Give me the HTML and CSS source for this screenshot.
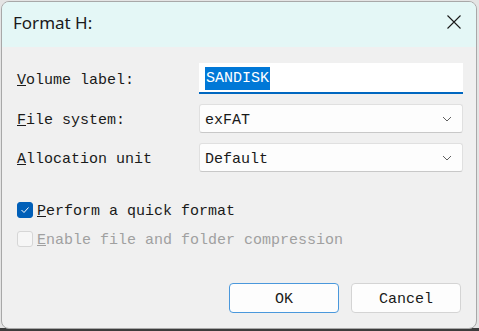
FILE: index.html
```html
<!DOCTYPE html>
<html>
<head>
    <meta charset="UTF-8">
    <title>Format H:</title>
    <link rel="stylesheet" href="styles.css">
</head>
<body>
    <div class="window">
        <div class="titlebar">
            <span class="title">Format H:</span>
            <svg class="close" width="16" height="16" viewBox="0 0 16 16">
                <path d="M1.5 1.5 L14.5 14.5 M14.5 1.5 L1.5 14.5" stroke="#1a1a1a" stroke-width="1.1" fill="none"/>
            </svg>
        </div>
        <div class="content">
            <div class="fields">
                <label class="label"><u>V</u>olume label:</label>
                <div class="textbox"><span class="selected">SANDISK</span></div>

                <label class="label"><u>F</u>ile system:</label>
                <div class="dropdown">
                    <span class="value">exFAT</span>
                    <svg width="10" height="6" viewBox="0 0 10 6"><path d="M1 1 L5 5 L9 1" stroke="#606060" fill="none"/></svg>
                </div>

                <label class="label"><u>A</u>llocation unit</label>
                <div class="dropdown">
                    <span class="value">Default</span>
                    <svg width="10" height="6" viewBox="0 0 10 6"><path d="M1 1 L5 5 L9 1" stroke="#606060" fill="none"/></svg>
                </div>
            </div>

            <div class="checks">
                <div class="check">
                    <span class="box checked">
                        <svg width="10" height="8" viewBox="0 0 10 8"><path d="M1.5 4 L4 6.5 L8.5 1.5" stroke="#fff" stroke-width="1" fill="none"/></svg>
                    </span>
                    <span class="value"><u>P</u>erform a quick format</span>
                </div>
                <div class="check disabled">
                    <span class="box"></span>
                    <span class="value"><u>E</u>nable file and folder compression</span>
                </div>
            </div>

            <div class="buttons">
                <button class="btn default">OK</button>
                <button class="btn">Cancel</button>
            </div>
        </div>
    </div>
</body>
</html>
```

FILE: styles.css
```css
body {
    margin: 0;
    width: 479px;
    height: 331px;
    overflow: hidden;
    background: linear-gradient(to bottom, #e4e4e4 328px, #3c3c3c 328px);
}

.window {
    margin: 1px 0 0 1px;
    width: 476px;
    height: 328px;
    box-sizing: border-box;
    border: 1px solid #a8a8a8;
    border-radius: 8px;
    overflow: hidden;
    display: flex;
    flex-direction: column;
    background: #f0f0f0;
}

.titlebar {
    height: 45px;
    box-sizing: border-box;
    flex-shrink: 0;
    background: #e4f7f6;
    display: flex;
    align-items: center;
    justify-content: space-between;
    padding: 0 14px 5px 11px;
}

.title {
    font-family: "Noto Sans", sans-serif;
    font-size: 17px;
    color: #1a1a1a;
}

.content {
    flex: 1;
    display: flex;
    flex-direction: column;
    padding: 16px 13px 0 15px;
    font-family: "Liberation Mono", monospace;
    font-size: 15px;
    color: #1a1a1a;
}

.fields {
    display: grid;
    grid-template-columns: 182px 264px;
    row-gap: 10px;
    align-items: center;
}

.label, .value {
    padding-top: 4px;
}

.textbox {
    height: 31px;
    box-sizing: border-box;
    background: #fff;
    border-bottom: 2px solid #0067c0;
    display: flex;
    align-items: center;
    padding: 2px 0 0 6px;
}

.selected {
    background: #0078d7;
    color: #fff;
    line-height: 23px;
    padding: 0 1px;
}

.dropdown {
    height: 29px;
    box-sizing: border-box;
    background: #fdfdfd;
    border: 1px solid #e0e0e0;
    border-bottom-color: #c8c8c8;
    border-radius: 3px;
    display: flex;
    align-items: center;
    justify-content: space-between;
    padding: 0 10px 0 5px;
}

.checks {
    margin-top: 23px;
    display: flex;
    flex-direction: column;
}

.check {
    height: 29px;
    display: flex;
    align-items: center;
    gap: 4px;
}

.box {
    width: 16px;
    height: 16px;
    box-sizing: border-box;
    border: 1px solid #d6d6d6;
    border-radius: 3px;
    background: #f6f6f6;
    display: flex;
    align-items: center;
    justify-content: center;
}

.box.checked {
    background: #005fb8;
    border-color: #005fb8;
}

.check.disabled {
    color: #a0a0a0;
}

.buttons {
    margin-top: auto;
    margin-bottom: 15px;
    display: flex;
    justify-content: flex-end;
    gap: 12px;
    padding-right: 2px;
}

.btn {
    width: 110px;
    height: 30px;
    padding-top: 3px;
    background: #fdfdfd;
    border: 1px solid #d4d4d4;
    border-radius: 4px;
    font-family: "Liberation Mono", monospace;
    font-size: 15px;
    color: #1a1a1a;
}

.btn.default {
    border-color: #4a98dc;
}
```
